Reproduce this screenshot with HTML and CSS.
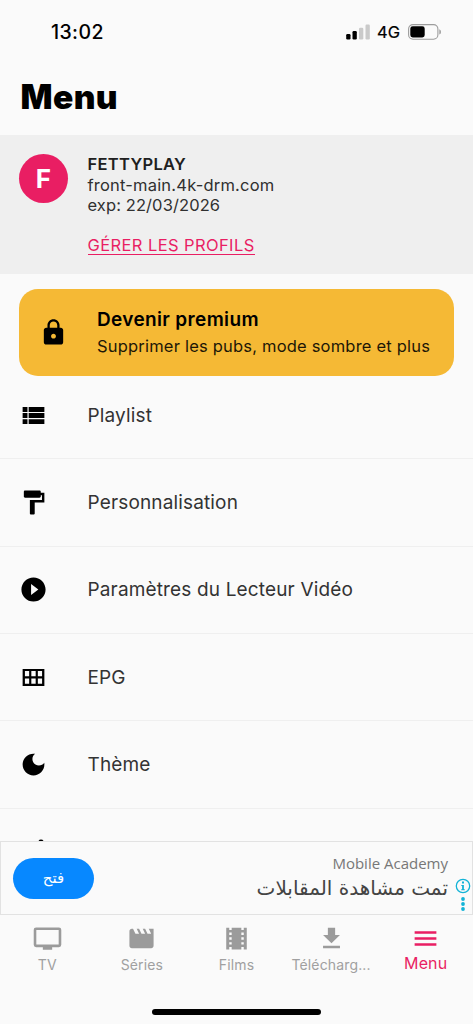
FILE: index.html
```html
<!DOCTYPE html>
<html lang="fr">
<head>
<meta charset="utf-8">
<title>Menu</title>
<link rel="stylesheet" href="styles.css">
</head>
<body>
<div class="screen">
  <header class="status">
    <span class="time">13:02</span>
    <div class="indicators">
      <svg class="signal" viewBox="0 0 25 16"><rect x="0.2" y="10" width="4.3" height="5.5" rx="1.2"/><rect x="6.5" y="7" width="4.3" height="8.5" rx="1.2"/><g fill="#cacaca"><rect x="13" y="3.8" width="4.3" height="11.7" rx="1.2"/><rect x="19.5" y="0.5" width="4.3" height="15" rx="1.2"/></g></svg>
      <span class="network">4G</span>
      <svg class="battery" viewBox="0 0 34 16"><rect x="0.6" y="0.6" width="29.3" height="14.6" rx="4.4" fill="none" stroke="#9c9c9c" stroke-width="1.1"/><rect x="2.3" y="2.3" width="14.4" height="11.2" rx="2.4"/><path d="M31.3 5.3Q33 6 33 8T31.3 10.6Z" fill="#9c9c9c"/></svg>
    </div>
  </header>
  <h1 class="title">Menu</h1>
  <section class="profile">
    <div class="avatar">F</div>
    <div class="details">
      <span class="name">FETTYPLAY</span>
      <span class="host">front-main.4k-drm.com</span>
      <span class="expiry">exp: 22/03/2026</span>
      <a class="manage">GÉRER LES PROFILS</a>
    </div>
  </section>
  <section class="premium">
    <svg class="icon" viewBox="0 0 24 24"><path d="M18 8h-1V6c0-2.76-2.24-5-5-5S7 3.240 7 6v2H6c-1.100 0-2 .9-2 2v10c0 1.100.9 2 2 2h12c1.100 0 2-.9 2-2V10c0-1.100-.9-2-2-2zm-6 9c-1.100 0-2-.9-2-2s.9-2 2-2 2 .9 2 2-.9 2-2 2zm3.100-9H8.900V6c0-1.710 1.390-3.100 3.100-3.100s3.100 1.390 3.100 3.100v2z"/></svg>
    <div class="offer"><strong class="offer-title">Devenir premium</strong><span class="offer-text">Supprimer les pubs, mode sombre et plus</span></div>
  </section>
  <ul class="menu">
    <li class="row"><svg class="icon" viewBox="0 0 24 24"><path d="M3 14h4v-4H3v4zm0 5h4v-4H3v4zM3 9h4V5H3v4zm5 5h13v-4H8v4zm0 5h13v-4H8v4zM8 5v4h13V5H8z"/></svg><span class="label">Playlist</span></li>
    <li class="row"><svg class="icon" viewBox="0 0 24 24"><path d="M18 4V3c0-.55-.45-1-1-1H5c-.55 0-1 .45-1 1v4c0 .55.45 1 1 1h12c.55 0 1-.45 1-1V6h1v4H9v11c0 .55.45 1 1 1h2c.55 0 1-.45 1-1v-9h8V4h-3z"/></svg><span class="label">Personnalisation</span></li>
    <li class="row"><svg class="icon" viewBox="0 0 24 24"><path d="M12 2C6.480 2 2 6.480 2 12s4.480 10 10 10 10-4.480 10-10S17.520 2 12 2zm-2 14.500v-9l6 4.500-6 4.500z"/></svg><span class="label">Paramètres du Lecteur Vidéo</span></li>
    <li class="row"><svg class="icon" viewBox="0 0 24 24"><path fill-rule="evenodd" d="M3 5h18v14H3zM4.900 6.700v4.300h3.500V6.700zm5.300 0v4.300h3.600V6.700zm5.400 0v4.300h3.500V6.700zM4.900 12.900v4.300h3.500v-4.300zm5.300 0v4.300h3.600v-4.300zm5.400 0v4.300h3.500v-4.300z"/></svg><span class="label">EPG</span></li>
    <li class="row"><svg class="icon" viewBox="0 0 24 24"><path d="M12 3c-4.970 0-9 4.030-9 9s4.030 9 9 9 9-4.030 9-9c0-.46-.04-.92-.1-1.360-.98 1.370-2.580 2.260-4.400 2.260-2.980 0-5.400-2.420-5.400-5.400 0-1.810.89-3.420 2.260-4.400-.44-.06-.9-.1-1.360-.1z"/></svg><span class="label">Thème</span></li>
    <li class="row partial"><svg class="next-icon" viewBox="0 0 8 4"><path d="M1.500 4V2Q2.300.6 4 .6T6.500 2V4Z"/></svg></li>
  </ul>
  <section class="ad">
    <button class="ad-button" lang="ar" dir="rtl">فتح</button>
    <div class="ad-copy"><span class="ad-name">Mobile Academy</span><span class="ad-text" lang="ar" dir="rtl">تمت مشاهدة المقابلات</span></div>
    <svg class="ad-info" viewBox="0 0 16 36"><circle cx="8" cy="8" r="6.700" fill="none" stroke="#13b3d7" stroke-width="1.300"/><path d="M7 3.600h2v2H7zM6.300 7h2.600v4.200h.9v1.100H6.200v-1.100h.9V8.100h-.8z"/><circle cx="8" cy="21" r="1.900"/><circle cx="8" cy="26" r="1.900"/><circle cx="8" cy="31" r="1.900"/></svg>
  </section>
  <nav class="tabs">
    <div class="tab"><svg class="tab-icon" viewBox="0 0 28 28"><path fill-rule="evenodd" d="M3 3.300h22a2.300 2.300 0 0 1 2.300 2.300v14.500a2.300 2.300 0 0 1-2.300 2.300h-6.500v2.400h-9v-2.400H3a2.300 2.300 0 0 1-2.300-2.300V5.600A2.300 2.300 0 0 1 3 3.300zM3.200 5.800v14.100h21.600V5.800z"/></svg><span>TV</span></div>
    <div class="tab"><svg class="tab-icon" viewBox="0 0 24 24"><path d="M18 4l2 4h-3l-2-4h-2l2 4h-3l-2-4H8l2 4H7L5 4H4c-1.100 0-2 .9-2 2v12c0 1.100.9 2 2 2h16c1.100 0 2-.9 2-2V4h-4z"/></svg><span>Séries</span></div>
    <div class="tab"><svg class="tab-icon" viewBox="0 0 24 24"><path fill-rule="evenodd" d="M18 3v2h-2V3H8v2H6V3H3.500v18H6v-2h2v2h8v-2h2v2h2.500V3H18zM8 17H6v-2h2v2zm0-4H6v-2h2v2zm0-4H6V7h2v2zm10 8h-2v-2h2v2zm0-4h-2v-2h2v2zm0-4h-2V7h2v2z"/></svg><span>Films</span></div>
    <div class="tab"><svg class="tab-icon" viewBox="0 0 24 24"><path d="M19 9h-4V3H9v6H5l7 7 7-7zM5 18v2h14v-2H5z"/></svg><span>Télécharg...</span></div>
    <div class="tab active"><svg class="tab-icon" viewBox="0 0 24 24"><path d="M3 18h18v-2H3v2zm0-5h18v-2H3v2zm0-7v2h18V6H3z"/></svg><span>Menu</span></div>
  </nav>
  <div class="home"></div>
</div>
</body>
</html>
```
FILE: styles.css
```css
* { box-sizing: border-box; }
body { margin: 0; background: #fafafa; font-family: Inter, sans-serif; color: #000; }
.screen { width: 473px; height: 1024px; display: flex; flex-direction: column; overflow: hidden; }
.status { flex: none; height: 64px; padding: 0 31px 0 51px; display: flex; align-items: center; justify-content: space-between; }
.time { font-size: 19.5px; font-weight: 500; letter-spacing: 0.4px; }
.indicators { display: flex; align-items: center; }
.signal { width: 25px; height: 16px; margin-right: 6px; }
.network { font-size: 16.5px; font-weight: 400; -webkit-text-stroke: 0.2px #000; width: 31px; }
.battery { width: 34px; height: 16px; margin-top: -1px; }
.title { flex: none; height: 71px; margin: 0; padding: 11px 0 0 20.5px; font-size: 33.5px; line-height: 44px; font-weight: 900; letter-spacing: 0.4px; }
.profile { flex: none; height: 139px; background: #efefef; padding: 19px 19px 0; display: flex; align-items: flex-start; gap: 19.5px; }
.avatar { width: 49px; height: 49px; border-radius: 50%; background: #e91e63; color: #fff; font-size: 26px; font-weight: 700; display: flex; align-items: center; justify-content: center; }
.details { display: flex; flex-direction: column; align-items: flex-start; font-size: 16.5px; line-height: 20.6px; color: #303030; }
.name { font-weight: 600; color: #202020; letter-spacing: 0.3px; }
.host { letter-spacing: 0.2px; }
.expiry { letter-spacing: 0.1px; }
.manage { margin-top: 20px; line-height: 18px; color: #e91e63; border-bottom: 1px solid #e91e63; letter-spacing: 0.4px; }
.premium { flex: none; height: 87px; margin: 15px 19px 0; padding-left: 20px; border-radius: 19px; background: #f5b935; display: flex; align-items: center; gap: 29px; }
.icon { flex: none; width: 29px; height: 29px; }
.offer { display: flex; flex-direction: column; }
.offer-title { font-size: 19px; line-height: 26px; font-weight: 600; letter-spacing: 0.35px; }
.offer-text { font-size: 16.5px; line-height: 26px; color: #1d1707; letter-spacing: 0.2px; white-space: nowrap; }
.menu { flex: none; height: 469px; margin: -4px 0 0; padding: 0; list-style: none; overflow: hidden; }
.row { height: 87.35px; padding: 0 19px; display: flex; align-items: center; gap: 39.5px; border-bottom: 1px solid #efefef; }
.label { font-size: 19px; color: #333; letter-spacing: 0.15px; }
.partial { align-items: flex-start; padding: 30px 37px 0; }
.next-icon { width: 8px; height: 4px; }
.ad { flex: none; height: 74px; border: 1px solid #e2e2e2; padding-left: 12px; display: flex; align-items: center; }
.ad-button { width: 81px; height: 41px; padding: 0; border: 0; border-radius: 21px; background: #0788ff; color: #fff; font: 15px "DejaVu Sans", sans-serif; }
.ad-copy { margin-left: auto; display: flex; flex-direction: column; align-items: flex-end; }
.ad-name { margin-top: -1px; font: 15px/21px "Open Sans", sans-serif; color: #777; }
.ad-text { font: 20px/28px "DejaVu Sans", sans-serif; color: #444; }
.ad-info { width: 16px; height: 36px; margin: 36px 1px 0 7px; fill: #13b3d7; align-self: flex-start; }
.tabs { flex: none; height: 70px; display: grid; grid-template-columns: repeat(5, 1fr); }
.tab { display: flex; flex-direction: column; align-items: center; padding-top: 9px; color: #a0a0a0; font-size: 14px; line-height: 22px; letter-spacing: 0.15px; }
.tab-icon { width: 29px; height: 29px; fill: #9b9b9b; }
.tab span { margin-top: 1px; }
.active { color: #e91e63; font-size: 16px; }
.tab.active span { margin-top: -1px; }
.active .tab-icon { fill: #e91e63; }
.home { flex: none; width: 169px; height: 6px; margin: 24px auto 0; border-radius: 3px; background: #000; }
```
